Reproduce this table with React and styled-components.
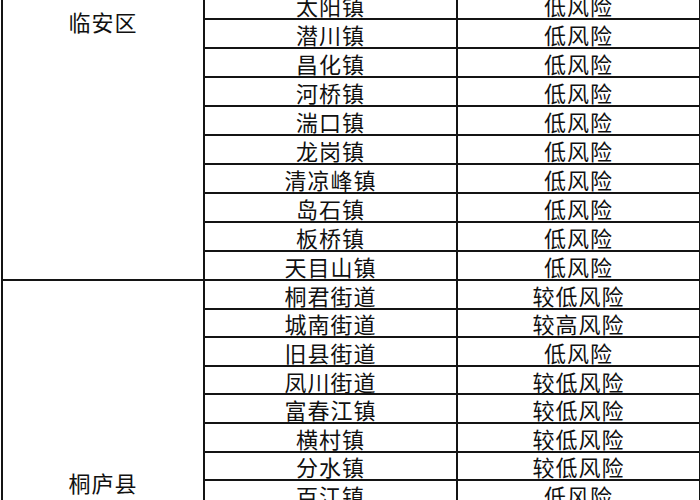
import styled, { createGlobalStyle } from 'styled-components';

const GlobalStyle = createGlobalStyle`
  html, body {
    margin: 0;
    padding: 0;
    background: #fff;
  }
  body {
    font-family: "Noto Sans CJK SC", "Noto Sans", sans-serif;
  }
`;

const Viewport = styled.div`
  width: 700px;
  height: 500px;
  overflow: hidden;
  background: #fff;
`;

const Sheet = styled.table`
  border-collapse: collapse;
  table-layout: fixed;
  width: 698px;
  margin: -243px 0 0 1px;
  color: #111;
  font-size: 22px;
  font-weight: 400;
`;

const Col = styled.col`
  width: ${p => p.$w}px;
`;

const Row = styled.tr`
  height: ${p => p.$h}px;
`;

const Cell = styled.td`
  border: 2px solid #141414;
  padding: 1px 0 0;
  text-align: center;
  vertical-align: middle;
  line-height: 1;
  white-space: nowrap;
  letter-spacing: 1px;
`;

const District = styled(Cell)`
  padding-top: 3px;
`;

const districts = [
  {
    name: '临安区',
    rowHeight: 29,
    towns: [
      ['锦城街道', '低风险'],
      ['锦北街道', '低风险'],
      ['锦南街道', '低风险'],
      ['玲珑街道', '低风险'],
      ['青山湖街道', '低风险'],
      ['高虹镇', '低风险'],
      ['太湖源镇', '低风险'],
      ['於潜镇', '低风险'],
      ['太阳镇', '低风险'],
      ['潜川镇', '低风险'],
      ['昌化镇', '低风险'],
      ['河桥镇', '低风险'],
      ['湍口镇', '低风险'],
      ['龙岗镇', '低风险'],
      ['清凉峰镇', '低风险'],
      ['岛石镇', '低风险'],
      ['板桥镇', '低风险'],
      ['天目山镇', '低风险'],
    ],
  },
  {
    name: '桐庐县',
    rowHeight: 28.6,
    towns: [
      ['桐君街道', '较低风险'],
      ['城南街道', '较高风险'],
      ['旧县街道', '低风险'],
      ['凤川街道', '较低风险'],
      ['富春江镇', '较低风险'],
      ['横村镇', '较低风险'],
      ['分水镇', '较低风险'],
      ['百江镇', '低风险'],
      ['瑶琳镇', '低风险'],
      ['江南镇', '低风险'],
      ['莪山畲族乡', '低风险'],
      ['钟山乡', '低风险'],
      ['新合乡', '低风险'],
      ['合村乡', '低风险'],
    ],
  },
];

export default function App() {
  return (
    <Viewport>
      <GlobalStyle />
      <Sheet>
        <colgroup>
          <Col $w={202} />
          <Col $w={253} />
          <Col $w={243} />
        </colgroup>
        <tbody>
          {districts.map(d =>
            d.towns.map(([town, risk], i) => (
              <Row key={d.name + town} $h={d.rowHeight}>
                {i === 0 && <District rowSpan={d.towns.length}>{d.name}</District>}
                <Cell>{town}</Cell>
                <Cell>{risk}</Cell>
              </Row>
            ))
          )}
        </tbody>
      </Sheet>
    </Viewport>
  );
}
